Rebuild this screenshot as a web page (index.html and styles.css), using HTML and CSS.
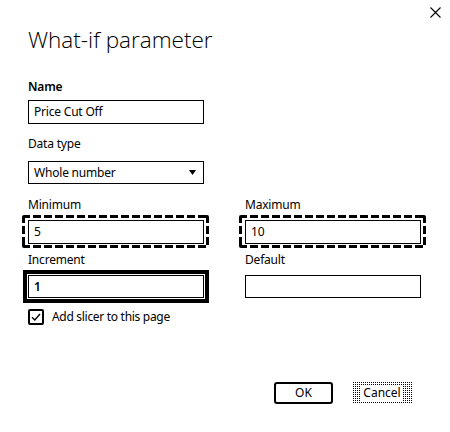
FILE: index.html
```html
<!DOCTYPE html>
<html>
<head>
<meta charset="utf-8">
<link rel="stylesheet" href="styles.css">
</head>
<body>
<div class="dialog">
  <div class="topbar">
    <button class="close" aria-label="Close">
      <svg width="11" height="11" viewBox="0 0 11 11"><path d="M0.5 0.5 L10.5 10.5 M10.5 0.5 L0.5 10.5" stroke="#000" stroke-width="1.1" fill="none"/></svg>
    </button>
  </div>
  <h1 class="title">What-if parameter</h1>

  <div class="field f-name">
    <label class="label label-strong">Name</label>
    <div class="input tall">Price Cut Off</div>
  </div>

  <div class="field f-type">
    <label class="label">Data type</label>
    <div class="input select">
      <span>Whole number</span>
      <svg class="arrow" width="7" height="5" viewBox="0 0 7 5"><path d="M0 0 H7 L3.5 5 Z" fill="#000"/></svg>
    </div>
  </div>

  <div class="grid g-minmax">
    <div class="field">
      <label class="label">Minimum</label>
      <div class="input tall dashed">5</div>
    </div>
    <div class="field">
      <label class="label">Maximum</label>
      <div class="input tall dashed">10</div>
    </div>
  </div>

  <div class="grid g-inc">
    <div class="field">
      <label class="label">Increment</label>
      <div class="input solidfocus">1</div>
    </div>
    <div class="field">
      <label class="label">Default</label>
      <div class="input"></div>
    </div>
  </div>

  <div class="check-row">
    <span class="checkbox">
      <svg width="12" height="12" viewBox="0 0 12 12"><path d="M2 6.2 L4.8 9 L10 3" stroke="#000" stroke-width="1.4" fill="none"/></svg>
    </span>
    <span class="check-text">Add slicer to this page</span>
  </div>

  <div class="buttons">
    <button class="btn ok">OK</button>
    <button class="btn cancel"><span>Cancel</span></button>
  </div>
</div>
</body>
</html>
```

FILE: styles.css
```css
* { box-sizing: border-box; }
html, body {
  margin: 0;
  padding: 0;
  background: #fff;
}
body {
  width: 450px;
  height: 432px;
  overflow: hidden;
  font-family: "Noto Sans", "Open Sans", sans-serif;
  color: #000;
}
.dialog {
  padding: 0 0 0 28px;
}
.topbar {
  display: flex;
  justify-content: flex-end;
  height: 20px;
  padding: 7px 9px 0 0;
}
.close {
  border: none;
  background: none;
  padding: 0;
  width: 11px;
  height: 11px;
  display: block;
}
.close svg { display: block; }
.title {
  margin: 5px 0 0 0;
  font-family: "Open Sans", "Noto Sans", sans-serif;
  font-weight: 300;
  font-size: 22.5px;
  line-height: 30px;
  height: 30px;
}
.label {
  display: block;
  font-size: 12px;
  line-height: 16px;
  height: 16px;
  margin-bottom: 7px;
  letter-spacing: -0.2px;
}
.label-strong { font-weight: 600; }
.field { width: 176px; }
.f-name { margin-top: 24px; }
.f-name .label { margin-bottom: 5px; }
.f-type { margin-top: 12px; }
.f-type .label { margin-bottom: 9px; }
.input {
  width: 176px;
  height: 23px;
  border: 1px solid #000;
  font-size: 12px;
  line-height: 21px;
  padding: 0 5px;
  background: #fff;
  letter-spacing: -0.2px;
}
.input.tall {
  height: 24px;
  line-height: 22px;
}
.select {
  display: flex;
  align-items: center;
  justify-content: space-between;
  padding-right: 7px;
}
.arrow { display: block; }
.grid {
  display: grid;
  grid-template-columns: 176px 176px;
  column-gap: 41px;
}
.g-minmax { margin-top: 13px; }
.g-inc { margin-top: 8px; }
.dashed {
  position: relative;
}
.dashed::before {
  content: "";
  position: absolute;
  top: -6px;
  left: -7px;
  right: -6px;
  bottom: -5px;
  background:
    repeating-linear-gradient(90deg, #000 0 8px, transparent 8px 11px) left top / 100% 3px no-repeat,
    repeating-linear-gradient(90deg, #000 0 8px, transparent 8px 11px) left bottom / 100% 3px no-repeat,
    repeating-linear-gradient(180deg, #000 0 8px, transparent 8px 11px) left top / 3px 100% no-repeat,
    repeating-linear-gradient(180deg, #000 0 8px, transparent 8px 11px) right top / 3px 100% no-repeat;
  border-radius: 2px;
}
.solidfocus {
  outline: 4px solid #000;
  outline-offset: 1px;
  font-weight: 600;
}
.check-row {
  display: flex;
  align-items: center;
  margin-top: 11px;
  height: 16px;
}
.checkbox {
  width: 16px;
  height: 16px;
  border: 2px solid #000;
  border-radius: 2px;
  display: flex;
  align-items: center;
  justify-content: center;
}
.checkbox svg { display: block; }
.check-text {
  margin-left: 8px;
  font-size: 12px;
  line-height: 16px;
  letter-spacing: -0.3px;
}
.buttons {
  display: flex;
  justify-content: flex-end;
  gap: 19px;
  margin-top: 57px;
  padding-right: 38px;
}
.btn {
  height: 22px;
  font-family: "Noto Sans", sans-serif;
  font-size: 12px;
  line-height: 18px;
  padding: 0;
  color: #000;
}
.ok {
  width: 59px;
  border: 2px solid #000;
  border-radius: 3px;
  background: #fff;
}
.cancel {
  width: 60px;
  border: none;
  background: repeating-conic-gradient(#000 0 25%, #fff 0 100%) 0 0 / 2px 2px;
  display: flex;
  align-items: center;
  justify-content: center;
}
.cancel span {
  background: #fff;
  padding: 0 2px;
  line-height: 16px;
}
```
